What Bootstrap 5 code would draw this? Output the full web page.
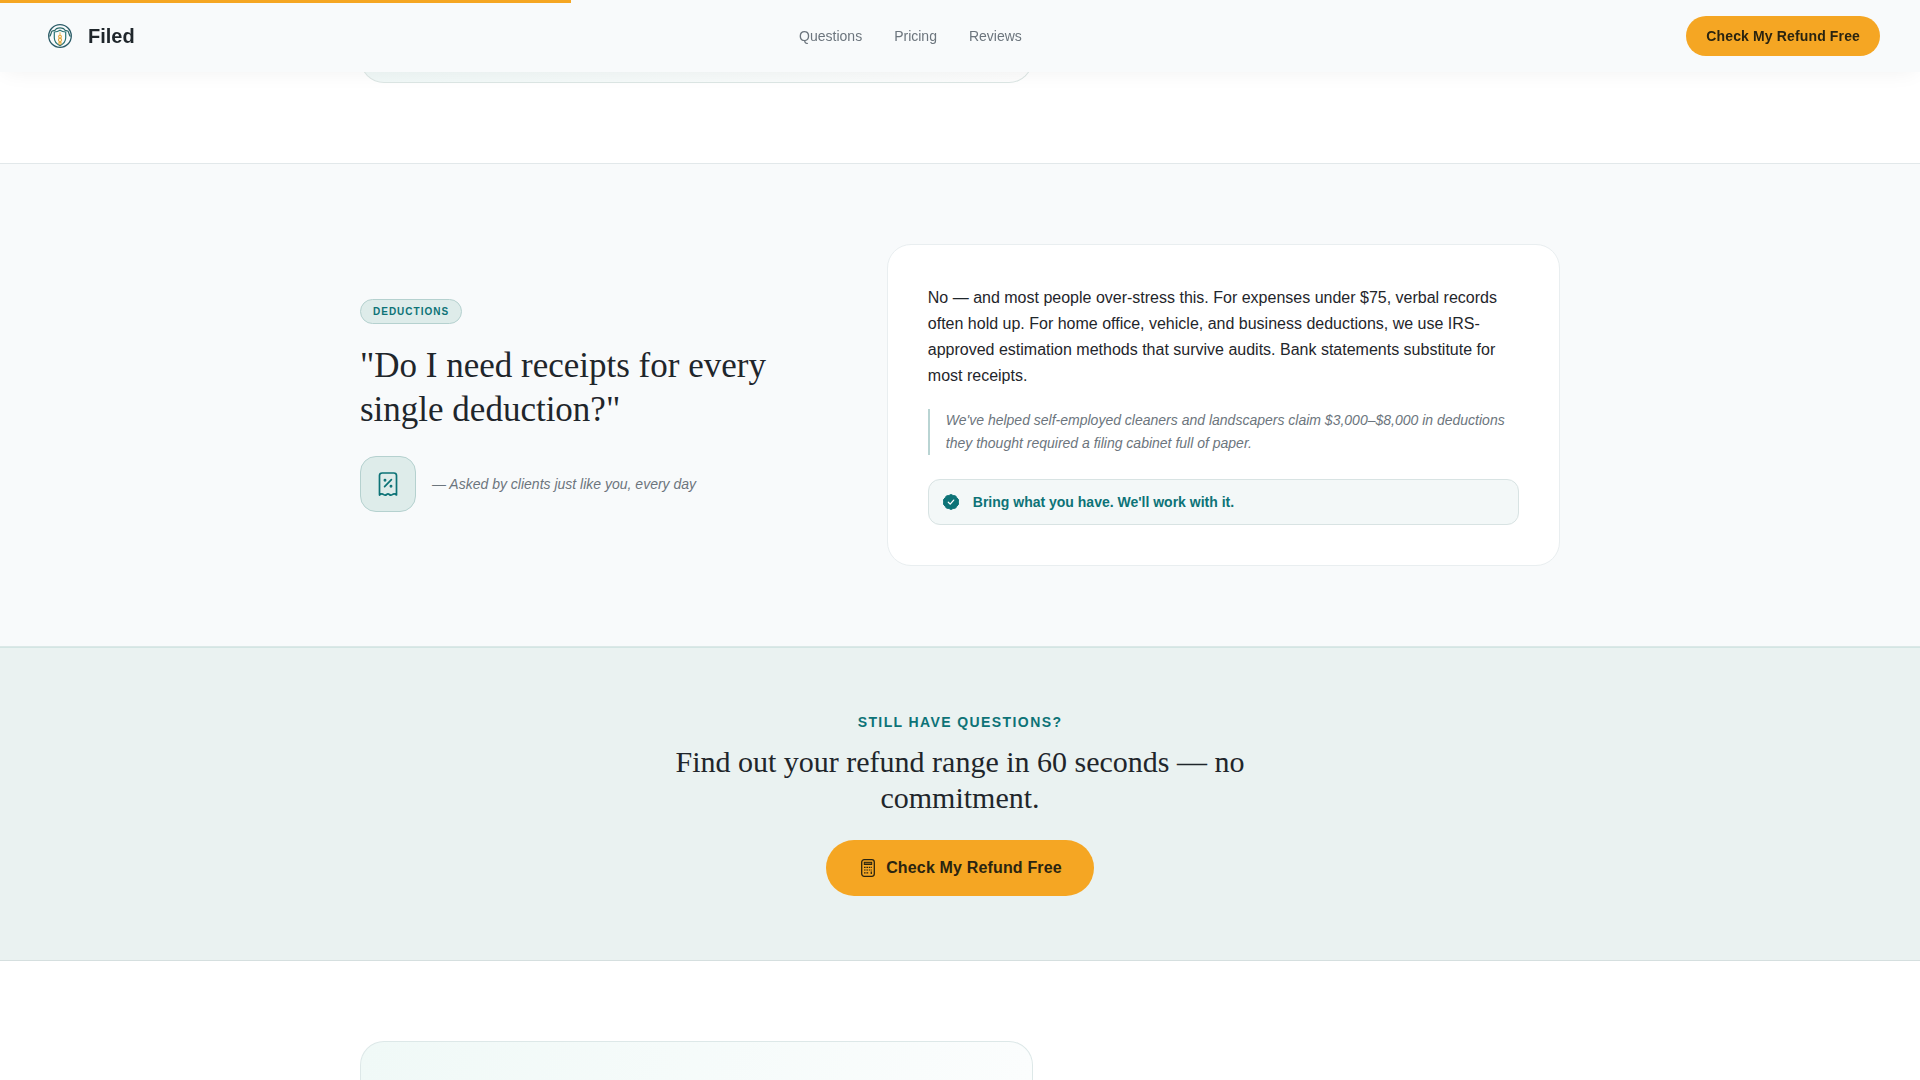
<!DOCTYPE html>
<html lang="en">
<head>
<meta charset="utf-8">
<meta name="viewport" content="width=device-width, initial-scale=1">
<title>Filed – Questions</title>
<link href="https://cdn.jsdelivr.net/npm/bootstrap@5.3.0/dist/css/bootstrap.min.css" rel="stylesheet">
<style>
  :root { --teal: #0d7377; --amber: #f5a623; --ink: #1f262b; --muted: #6c757d; --mist: #f8fafb; --line: #e2e8ea; --mint: #deecea; --mint-line: #b5d1cf; }
  body { font-family: "Liberation Sans", Arial, sans-serif; color: var(--ink); background: #fff; }
  .read-progress { height: 3px; z-index: 1040; background: transparent; border-radius: 0; }
  .read-progress .progress-bar { background: var(--amber); }
  .site-nav { min-height: 72px; padding: 0 40px; background: var(--mist); box-shadow: 0 4px 20px -4px rgba(20, 40, 30, .06); }
  .site-nav .navbar-brand { font-size: 20px; line-height: 24px; color: var(--ink); }
  .site-nav .nav-link { font-size: 14px; line-height: 20px; color: var(--muted); }
  .links-gap { gap: 32px; }
  .btn-amber { --bs-btn-bg: var(--amber); --bs-btn-color: #2a2410; --bs-btn-hover-bg: #e89a17; --bs-btn-hover-color: #2a2410; --bs-btn-active-bg: #e89a17; border: 0; font-weight: 700; letter-spacing: .01em; }
  .btn-nav { font-size: 14px; line-height: 20px; padding: 10px 20px; }
  .btn-cta { font-size: 16px; line-height: 24px; padding: 16px 32px; }
  .page-wrap { max-width: 1200px; }
  .band { padding: 80px 0; }
  .band-mist { background: var(--mist); border-top: 1px solid var(--line); border-bottom: 1px solid #dbe8e7; }
  .qa-grid { grid-template-columns: 2fr 3fr; gap: 78px; }
  .qa-grid.qa-flip { grid-template-columns: 3fr 2fr; }
  .answer { border: 1px solid #e9eef0; border-radius: 24px; padding: 40px; background: #fff; }
  .answer-tint { background: linear-gradient(110deg, #f0f9f7, #fbfdfd); border-color: #dde8e8; }
  .answer-end { height: 83px; border-top: 0; border-radius: 0 0 24px 24px; background: linear-gradient(90deg, #f0f8f7, #fdfdfd); border-color: #dce6e4; }
  .answer-start { border-bottom: 0; border-radius: 24px 24px 0 0; }
  .topic { font-size: 10px; line-height: 15px; letter-spacing: 1px; padding: 4px 12px; color: var(--teal); background: var(--mint); border: 1px solid var(--mint-line); }
  .display-serif { font-family: "Liberation Serif", "Times New Roman", serif; font-weight: 400; margin: 0; }
  .question { font-size: 35px; line-height: 44px; }
  .left-stack h2 { margin: 20px 0 24px; }
  .icon-tile { width: 56px; height: 56px; border-radius: 16px; background: var(--mint); border: 1px solid var(--mint-line); color: var(--teal); }
  .aside-text { font-size: 14px; line-height: 23px; color: var(--muted); font-style: italic; }
  .asked-by { line-height: 24px; }
  .answer-text { font-size: 16px; line-height: 26px; margin: 0 0 20px; }
  .proof { border-left: 2px solid #b9d4d3; padding-left: 16px; margin: 0 0 24px; }
  .takeaway { font-size: 14px; line-height: 20px; padding: 12px 14px; gap: 14px; color: var(--teal); background: #f3f8f8; border: 1px solid #d8e3e3; border-radius: 12px; }
  .cta-band { background: #eaf2f1; border-top: 1px solid #d3e5e3; border-bottom: 1px solid #d5dfdf; padding: 64px 0; }
  .eyebrow { font-size: 14px; line-height: 20px; letter-spacing: .1em; color: var(--teal); margin: 0 0 12px; }
  .cta-title { font-size: 30px; line-height: 36px; max-width: 600px; margin: 0 auto 24px; }
</style>
</head>
<body>
<div class="vh-100 overflow-hidden d-flex flex-column">
  <div class="progress read-progress fixed-top" role="progressbar" aria-label="Reading progress" aria-valuenow="30" aria-valuemin="0" aria-valuemax="100"><div class="progress-bar" style="width: 29.75%"></div></div>
  <nav class="site-nav fixed-top d-flex align-items-center justify-content-between">
    <a class="navbar-brand fw-bold d-flex align-items-center gap-2 m-0 p-0" href="#">
      <svg width="40" height="40" viewBox="0 0 40 40" fill="none" aria-hidden="true">
        <circle cx="20" cy="20" r="11.300" stroke="#2c5c68" stroke-width="1.300"/>
        <path d="M12.200 14.800c2.300.2 3.600-.7 4.300-2.200 2.200-1 4.800-1 7 0 .7 1.500 2 2.400 4.300 2.200M9.500 20.500c1.600-1 1.200-3.800 2.700-5.700M30.500 20.500c-1.600-1-1.200-3.800-2.700-5.700" stroke="#2b6a6a" stroke-width="1.200"/>
        <path d="M20 14.200c-1.800 1.200-3.600 1.700-5.700 1.800v5.700c0 3.500 2.300 6.300 5.700 7.900 3.400-1.600 5.700-4.400 5.700-7.900V16c-2.100-.1-3.900-.6-5.700-1.800z" fill="#fbfcf8" stroke="#2a7476" stroke-width="1.200"/>
        <path d="M20 16.300v3" stroke="#e9b558" stroke-width="1"/>
        <circle cx="20" cy="20.600" r="1.400" stroke="#e5a83a" stroke-width="1.100"/>
        <circle cx="20" cy="24" r="1.600" stroke="#e5a83a" stroke-width="1.100"/>
        <circle cx="20" cy="27.300" r="1.200" stroke="#e5a83a" stroke-width="1.100"/>
      </svg>Filed</a>
    <div class="nav links-gap">
      <a class="nav-link p-0" href="#">Questions</a>
      <a class="nav-link p-0" href="#">Pricing</a>
      <a class="nav-link p-0" href="#">Reviews</a>
    </div>
    <button type="button" class="btn btn-amber btn-nav rounded-pill">Check My Refund Free</button>
  </nav>

  <main class="flex-grow-1 d-flex flex-column">
    <section class="band pt-0">
      <div class="page-wrap mx-auto d-grid qa-grid qa-flip">
        <div class="answer answer-tint answer-end"></div>
      </div>
    </section>

    <section class="band band-mist">
      <div class="page-wrap mx-auto d-grid qa-grid align-items-center">
        <div class="left-stack d-flex flex-column align-items-start">
          <span class="topic fw-bold rounded-pill">DEDUCTIONS</span>
          <h2 class="display-serif question">"Do I need receipts for every single deduction?"</h2>
          <div class="d-flex align-items-center gap-3">
            <div class="icon-tile d-flex align-items-center justify-content-center">
              <svg width="28" height="28" viewBox="0 0 28 28" fill="none" stroke="currentColor" stroke-width="1.700" stroke-linecap="round" stroke-linejoin="round" aria-hidden="true">
                <path d="M5.500 25V5.500c0-1.700 1-2.500 2.700-2.500h11.600c1.700 0 2.700.8 2.700 2.500V25c-1.500-1.300-2.900-1.300-4.200-.4-1.200.8-1.900.8-2.900-.1-.9-.7-1.900-.7-2.800 0-1 .9-1.700.9-2.900.1-1.300-.9-2.700-.9-4.200.4z"/>
                <path d="M17.400 9.700l-6.800 6.900"/>
                <circle cx="11" cy="10.300" r=".6" fill="currentColor"/><circle cx="17" cy="16.200" r=".6" fill="currentColor"/>
              </svg>
            </div>
            <span class="aside-text asked-by">— Asked by clients just like you, every day</span>
          </div>
        </div>
        <article class="answer">
          <p class="answer-text">No — and most people over-stress this. For expenses under $75, verbal records often hold up. For home office, vehicle, and business deductions, we use IRS-approved estimation methods that survive audits. Bank statements substitute for most receipts.</p>
          <blockquote class="proof aside-text">We've helped self-employed cleaners and landscapers claim $3,000–$8,000 in deductions they thought required a filing cabinet full of paper.</blockquote>
          <div class="takeaway d-flex align-items-center fw-bold">
            <svg width="16" height="16" viewBox="0 0 16 16" aria-hidden="true">
              <path fill="currentColor" stroke="currentColor" stroke-width="1" stroke-linejoin="round" d="M8 .5l2.100 1 2.500.4 1.300 2 1.600 1.700-.2 2.400.2 2.400-1.600 1.700-1.300 2-2.500.4-2.100 1-2.100-1-2.500-.4-1.300-2L.5 10.400.700 8 .500 5.600l1.600-1.700 1.300-2 2.500-.4z"/>
              <path d="M5.300 8.300l1.900 1.800 3.500-4" fill="none" stroke="#fff" stroke-width="1.300" stroke-linecap="round" stroke-linejoin="round"/>
            </svg>
            <span>Bring what you have. We'll work with it.</span>
          </div>
        </article>
      </div>
    </section>

    <section class="cta-band text-center">
      <p class="eyebrow fw-bold">STILL HAVE QUESTIONS?</p>
      <h2 class="display-serif cta-title">Find out your refund range in 60 seconds — no commitment.</h2>
      <button type="button" class="btn btn-amber btn-cta rounded-pill d-inline-flex align-items-center gap-2">
        <svg width="20" height="20" viewBox="0 0 20 20" fill="none" stroke="currentColor" aria-hidden="true">
          <rect x="3.700" y="1.700" width="12.600" height="16.600" rx="2.500" stroke-width="1.300"/>
          <rect x="6.300" y="4.300" width="7.400" height="2.200" stroke-width="1" fill="currentColor" fill-opacity=".5"/>
          <path d="M6 9.300h8M6 12h8M6 14.800h5" stroke-width="1.200" stroke-dasharray="1.600 .8"/>
          <path d="M13.300 13.500v2.500" stroke-width="1.300"/>
        </svg>Check My Refund Free</button>
    </section>

    <section class="band pb-0 flex-grow-1 d-flex">
      <div class="page-wrap w-100 mx-auto d-grid qa-grid qa-flip">
        <div class="answer answer-tint answer-start pb-0"></div>
      </div>
    </section>
  </main>
</div>
<script src="https://cdn.jsdelivr.net/npm/bootstrap@5.3.0/dist/js/bootstrap.bundle.min.js"></script>
</body>
</html>
